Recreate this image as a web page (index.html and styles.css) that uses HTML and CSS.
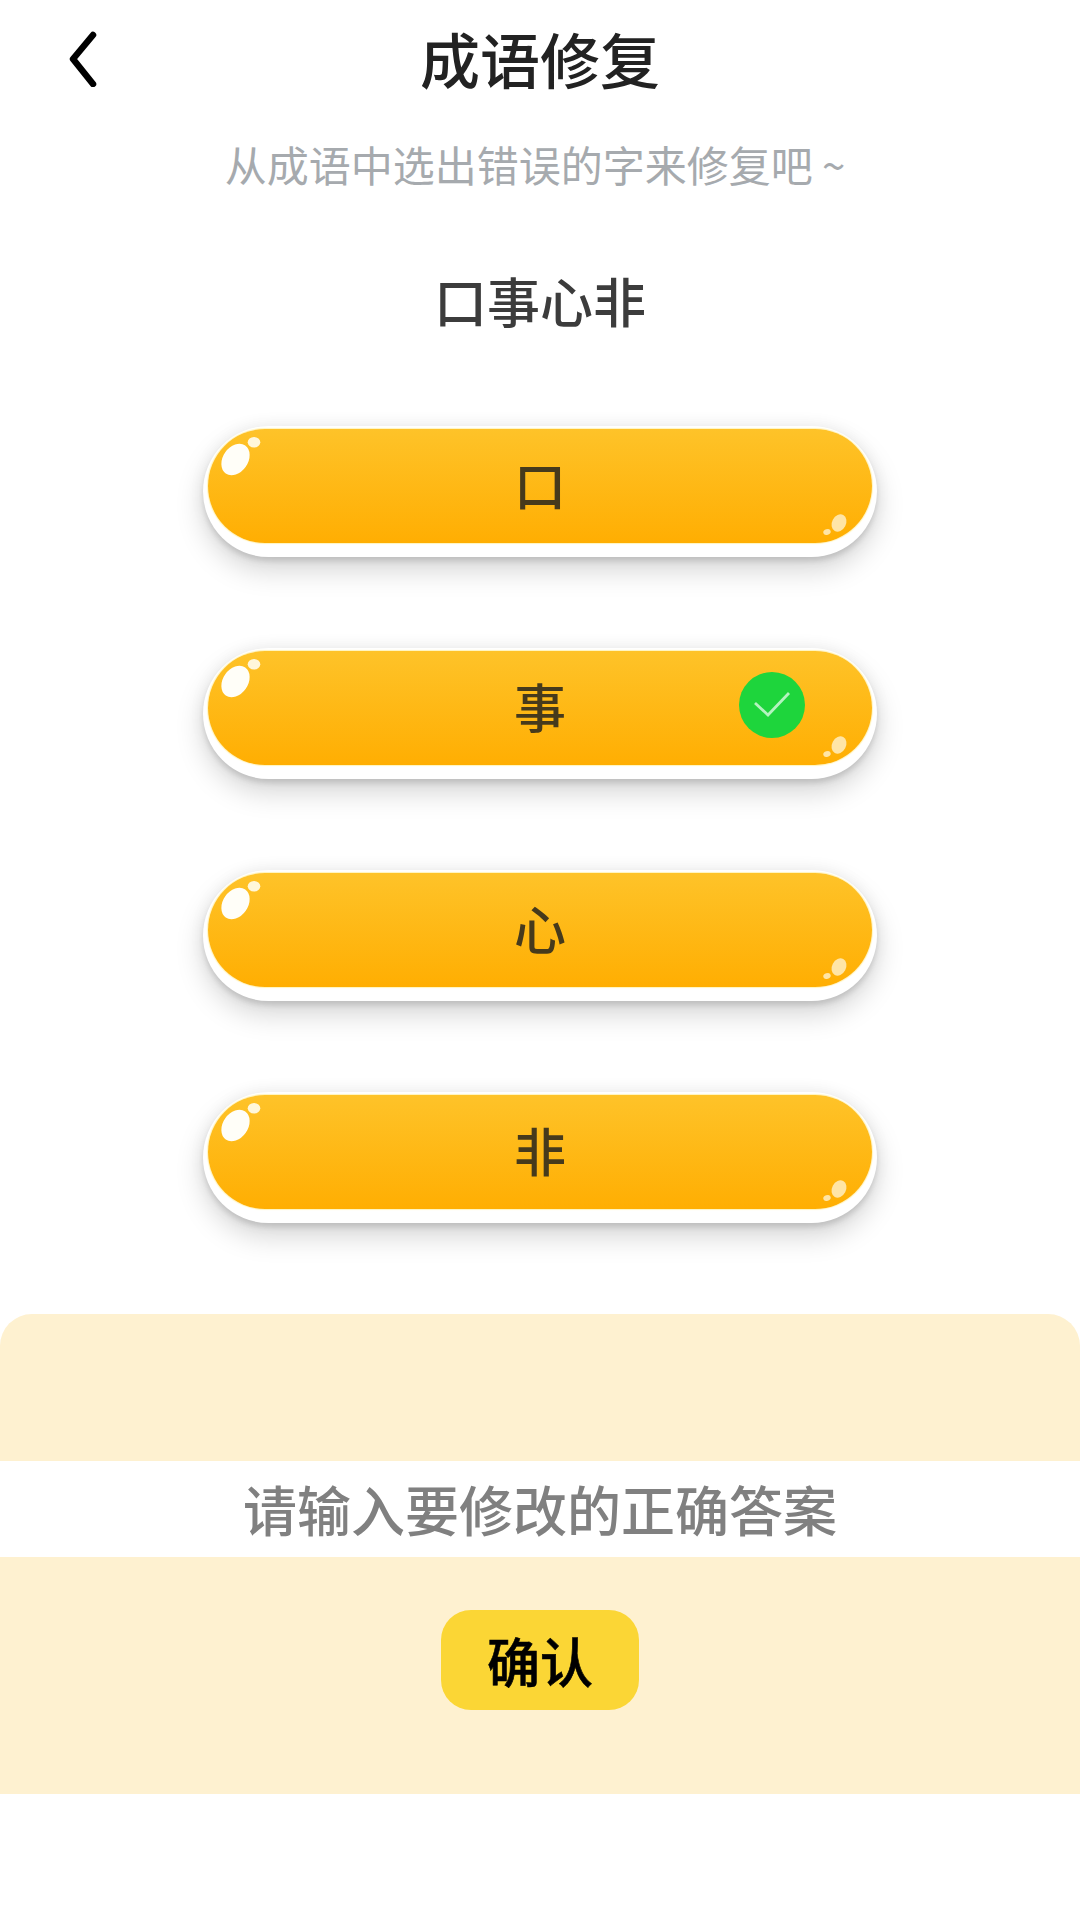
FILE: index.html
```html
<!DOCTYPE html>
<html lang="zh-CN">
<head>
<meta charset="utf-8">
<title>成语修复</title>
<link rel="stylesheet" href="styles.css">
</head>
<body>
<div class="page">
  <header class="header">
    <svg class="back" width="30" height="56" viewBox="0 0 30 56"><path d="M25 4 L5 28 L25 53" fill="none" stroke="#000" stroke-width="6.5" stroke-linejoin="round" stroke-linecap="round"/></svg>
    <h1 class="title">成语修复</h1>
  </header>
  <p class="subtitle">从成语中选出错误的字来修复吧 ~</p>
  <p class="idiom">口事心非</p>
  <ul class="options">
    <li class="option"><div class="pill"><span class="char">口</span>
      <svg class="gloss" viewBox="0 0 664 114"><ellipse cx="27.5" cy="30.5" rx="12.5" ry="17" transform="rotate(35 27.5 30.5)" fill="#fffef8"/><ellipse cx="46" cy="13.3" rx="6.3" ry="5.2" fill="#fff7da"/><ellipse cx="631" cy="94" rx="7" ry="9" transform="rotate(28 631 94)" fill="#ffe5a6"/><ellipse cx="619" cy="103" rx="3.8" ry="2.8" transform="rotate(-20 619 103)" fill="#ffe5a6"/></svg>
    </div></li>
    <li class="option"><div class="pill"><span class="char">事</span>
      <svg class="gloss" viewBox="0 0 664 114"><ellipse cx="27.5" cy="30.5" rx="12.5" ry="17" transform="rotate(35 27.5 30.5)" fill="#fffef8"/><ellipse cx="46" cy="13.3" rx="6.3" ry="5.2" fill="#fff7da"/><ellipse cx="631" cy="94" rx="7" ry="9" transform="rotate(28 631 94)" fill="#ffe5a6"/><ellipse cx="619" cy="103" rx="3.8" ry="2.8" transform="rotate(-20 619 103)" fill="#ffe5a6"/></svg>
      <svg class="check" width="66" height="66" viewBox="0 0 66 66"><circle cx="33" cy="33" r="33" fill="#1ed53c"/><path d="M16 31 L29 43 L50 21" fill="none" stroke="#b4f3bf" stroke-width="2.8"/></svg>
    </div></li>
    <li class="option"><div class="pill"><span class="char">心</span>
      <svg class="gloss" viewBox="0 0 664 114"><ellipse cx="27.5" cy="30.5" rx="12.5" ry="17" transform="rotate(35 27.5 30.5)" fill="#fffef8"/><ellipse cx="46" cy="13.3" rx="6.3" ry="5.2" fill="#fff7da"/><ellipse cx="631" cy="94" rx="7" ry="9" transform="rotate(28 631 94)" fill="#ffe5a6"/><ellipse cx="619" cy="103" rx="3.8" ry="2.8" transform="rotate(-20 619 103)" fill="#ffe5a6"/></svg>
    </div></li>
    <li class="option"><div class="pill"><span class="char">非</span>
      <svg class="gloss" viewBox="0 0 664 114"><ellipse cx="27.5" cy="30.5" rx="12.5" ry="17" transform="rotate(35 27.5 30.5)" fill="#fffef8"/><ellipse cx="46" cy="13.3" rx="6.3" ry="5.2" fill="#fff7da"/><ellipse cx="631" cy="94" rx="7" ry="9" transform="rotate(28 631 94)" fill="#ffe5a6"/><ellipse cx="619" cy="103" rx="3.8" ry="2.8" transform="rotate(-20 619 103)" fill="#ffe5a6"/></svg>
    </div></li>
  </ul>
  <section class="panel">
    <div class="answer">请输入要修改的正确答案</div>
    <button class="confirm" type="button">确认</button>
  </section>
</div>
</body>
</html>
```
FILE: styles.css
```css
* { box-sizing: border-box; }
html, body { margin: 0; padding: 0; background: #fff; }
body { font-family: "Noto Sans CJK SC", "Noto Sans", sans-serif; }
.page { width: 1080px; height: 1920px; overflow: hidden; background: #fff; }

.header { height: 122px; display: flex; align-items: center; justify-content: center; position: relative; }
.back { position: absolute; left: 68px; top: 31px; }
.title { margin: 0 0 7px; font-size: 60px; line-height: 115px; font-weight: 500; color: #222; }

.subtitle { margin: 0; height: 88px; padding-right: 10px; line-height: 84px; text-align: center; font-size: 42px; color: #a6aaae; }

.idiom { margin: 0; height: 216px; line-height: 180px; text-align: center; font-size: 53px; font-weight: 500; color: #3c3c3c; }

.options { list-style: none; margin: 0; padding: 0; display: flex; flex-direction: column; align-items: center; gap: 91px; }
.option { width: 674px; height: 131px; padding: 3px 5px 14px; background: #fff; border-radius: 66px; box-shadow: 0 4px 5px rgba(0,0,0,.1), 0 13px 28px rgba(0,0,0,.17), 0 0 16px rgba(0,0,0,.06); }
.pill { position: relative; height: 114px; padding-bottom: 4px; border-radius: 57px; background: linear-gradient(180deg, #fec329 0%, #ffae02 100%); box-shadow: 0 0 1px 1px #fff4bc; display: flex; align-items: center; justify-content: center; }
.char { font-size: 52px; line-height: 110px; font-weight: 500; color: #463a1c; }
.gloss { position: absolute; left: 0; top: 0; width: 664px; height: 114px; }
.check { position: absolute; left: 531px; top: 21px; }

.panel { margin-top: 91px; height: 480px; padding-top: 147px; background: #fef1d0; border-radius: 32px 32px 0 0; display: flex; flex-direction: column; align-items: center; }
.answer { width: 100%; height: 96px; background: #fff; text-align: center; line-height: 96px; font-size: 54px; font-weight: 500; color: #808080; }
.confirm { margin-top: 53px; width: 198px; height: 100px; padding: 0; border: 0; border-radius: 30px; background: #fbd635; font-family: inherit; font-size: 53px; font-weight: 500; -webkit-text-stroke: 0.6px #000; line-height: 100px; color: #000; }
```
